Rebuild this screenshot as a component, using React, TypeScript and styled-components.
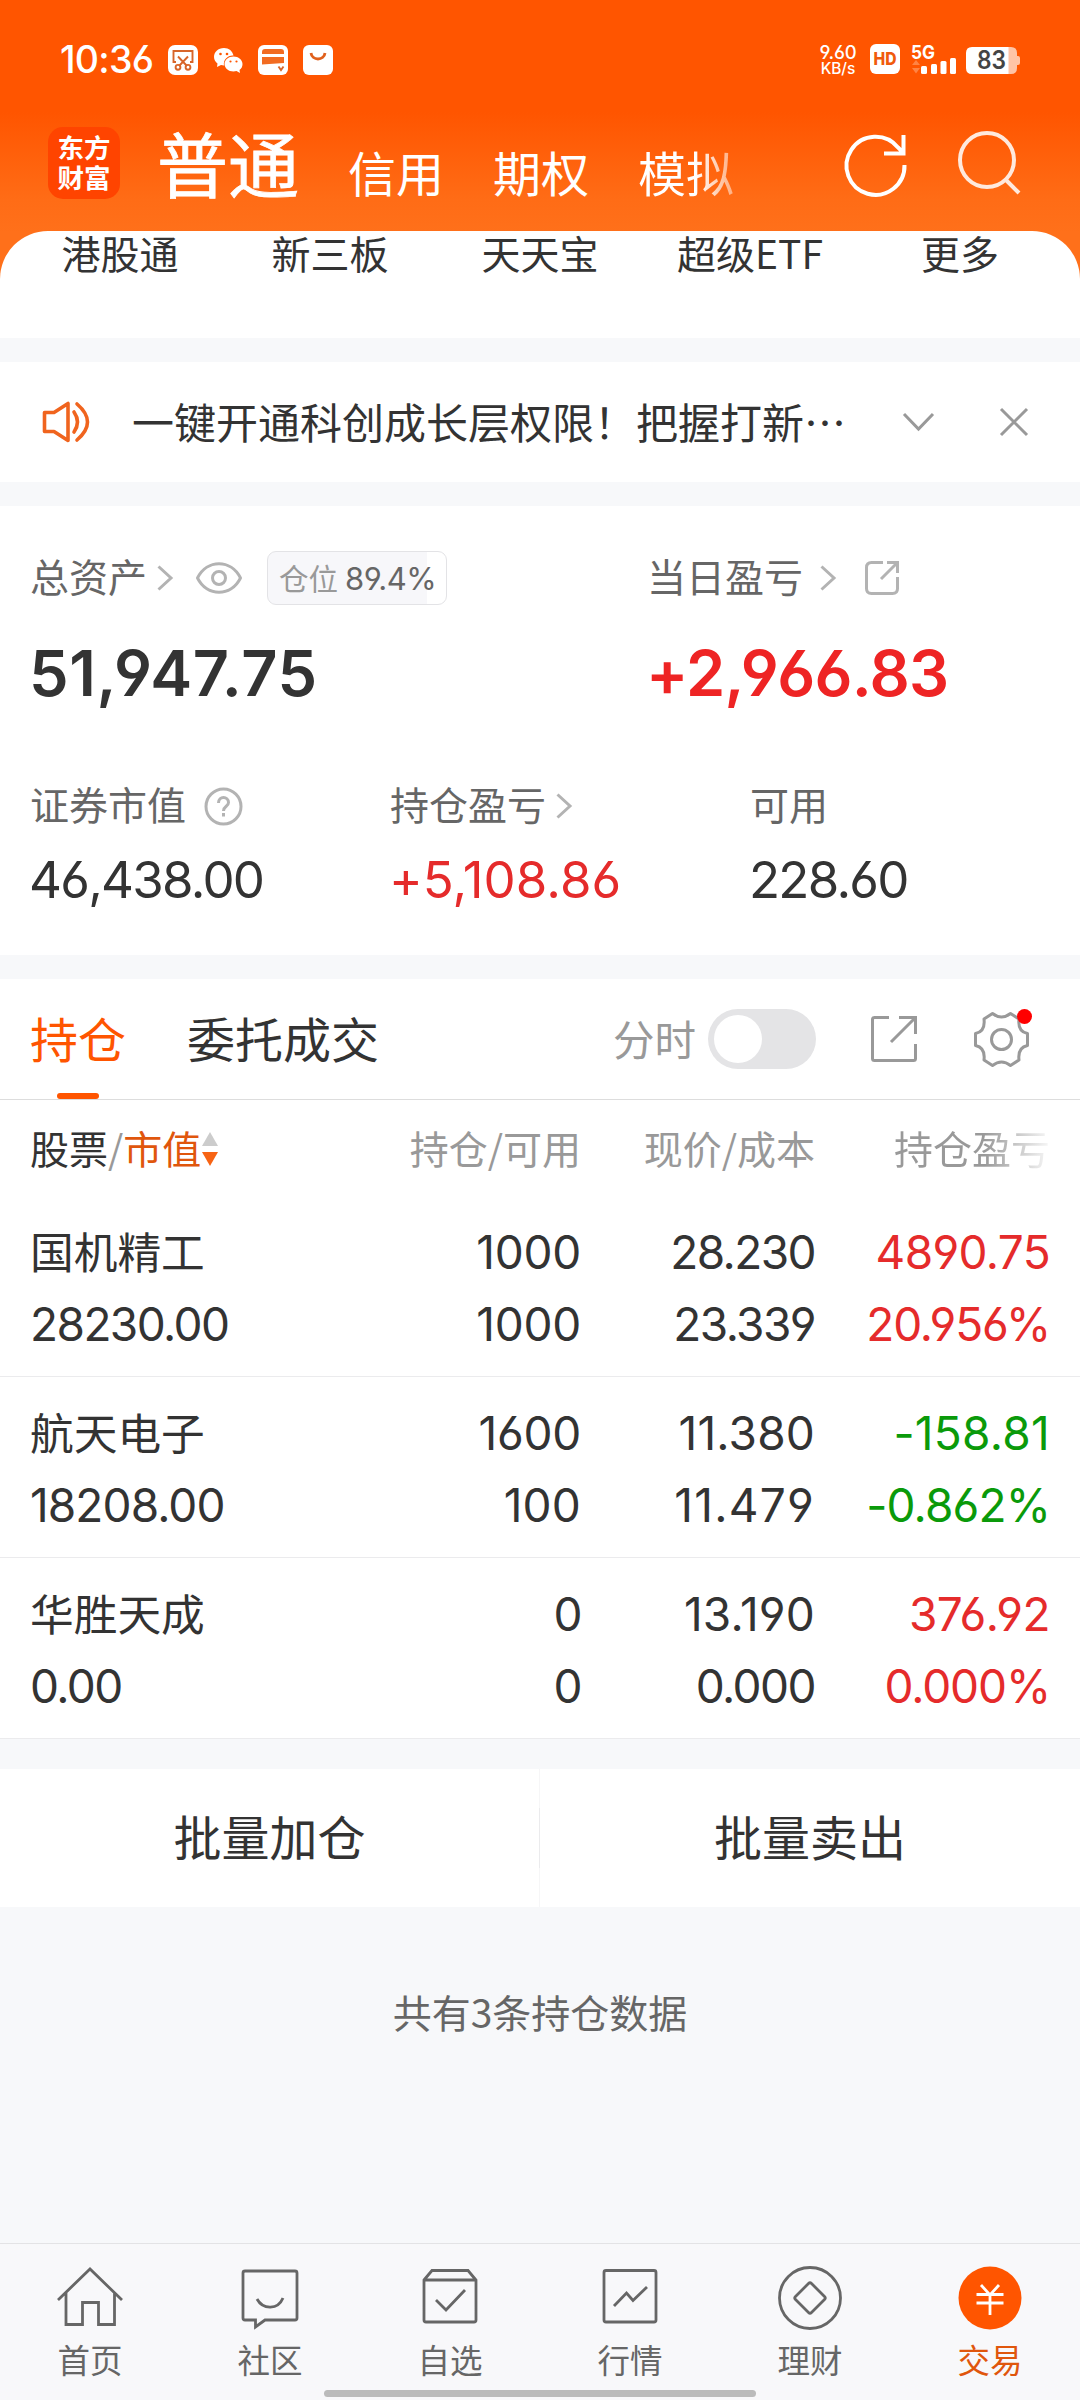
import React from 'react';
import styled, { createGlobalStyle } from 'styled-components';

const CJK = '"Noto Sans CJK SC", sans-serif';
const NUM = 'Inter, "Noto Sans CJK SC", sans-serif';

const Global = createGlobalStyle`
  * { box-sizing: border-box; }
  html, body { margin: 0; padding: 0; background: #f7f8fa; }
  body { font-family: ${CJK}; color: #333; }
  svg { display: block; flex: none; overflow: visible; }
`;

const Screen = styled.div`
  width: 1080px;
  height: 2400px;
  display: flex;
  flex-direction: column;
  background: #f7f8fa;
  overflow: hidden;
`;

const Hero = styled.header`
  height: 338px;
  flex: none;
  display: flex;
  flex-direction: column;
  background: linear-gradient(#ff5500 0, #ff5500 112px, #ff6c16 200px, #ff701a 232px);
`;

const StatusBar = styled.div`
  height: 104px;
  padding: 15px 60px 0 60px;
  display: flex;
  align-items: center;
  color: #fff;
`;

const Num = styled.span<{ $size: number; $weight?: number; $color?: string; $track?: number }>`
  font-family: ${NUM};
  font-size: ${p => p.$size}px;
  font-weight: ${p => p.$weight ?? 400};
  color: ${p => p.$color ?? 'inherit'};
  letter-spacing: ${p => p.$track ?? -0.035}em;
  font-feature-settings: "cv03", "cv04";
  line-height: 1;
  white-space: nowrap;
`;

const Clock = styled.div`
  width: 92px;
  display: flex;
`;

const StatusIcons = styled.div`
  display: flex;
  align-items: center;
  gap: 15px;
  margin-left: 16px;
`;

const StatusRight = styled.div`
  display: flex;
  align-items: center;
  margin-left: auto;
`;

const NetSpeed = styled.div`
  width: 40px;
  display: flex;
  flex-direction: column;
  align-items: center;
  margin-right: 12px;
`;

const AccountBar = styled.div`
  height: 127px;
  padding: 0 60px 0 48px;
  display: flex;
  align-items: flex-start;
  color: #fff;
`;

const Logo = styled.div`
  width: 72px;
  height: 72px;
  margin-top: 23px;
  padding-bottom: 2px;
  border-radius: 15px;
  background: #ff4400;
  display: grid;
  place-content: center;
  font-size: 26.5px;
  line-height: 30px;
  font-weight: 700;
  text-align: center;
`;

const AccountTabs = styled.nav`
  display: flex;
  align-items: baseline;
  gap: 49px;
  width: 594px;
  margin-left: 37px;
  padding-top: 7px;
`;

const AccountTab = styled.span<{ $active?: boolean; $fade?: boolean }>`
  font-size: ${p => (p.$active ? 71 : 48)}px;
  line-height: 100px;
  font-weight: 400;
  ${p => p.$active && '-webkit-text-stroke: 0.8px #fff;'}
  ${p => p.$fade && `
    background: linear-gradient(90deg, #fff 60%, rgba(255,255,255,.45));
    background-clip: text;
    color: transparent;
  `}
`;

const HeroActions = styled.div`
  display: flex;
  align-items: center;
  gap: 49px;
  margin: 28px -1px 0 auto;
`;

const Shortcuts = styled.div`
  height: 107px;
  display: grid;
  grid-template-columns: repeat(5, 210px);
  justify-content: center;
  background: #fff;
  border-radius: 48px 48px 0 0;
  font-size: 39px;
  line-height: 43px;
  text-align: center;
`;

const Notice = styled.section`
  height: 120px;
  flex: none;
  margin-top: 24px;
  padding: 0 52px 0 42px;
  background: #fff;
  display: flex;
  align-items: center;
  font-size: 42px;
`;

const NoticeText = styled.span`
  width: 716px;
  margin-left: 41px;
  padding-bottom: 4px;
  white-space: nowrap;
`;

const NoticeActions = styled.div`
  display: flex;
  align-items: center;
  gap: 66px;
  margin-left: auto;
`;

const Assets = styled.section`
  height: 449px;
  flex: none;
  margin-top: 24px;
  padding: 45px 30px 0;
  background: #fff;
`;

const Totals = styled.div`
  display: grid;
  grid-template-columns: 617px 1fr;
`;

const Breakdown = styled.div`
  display: grid;
  grid-template-columns: repeat(3, 360px);
  margin-top: 72px;
`;

const Label = styled.div<{ $height: number }>`
  height: ${p => p.$height}px;
  display: flex;
  align-items: center;
  font-size: 39px;
  color: #666;
  white-space: nowrap;
`;

const LabelText = styled.span`
  padding-bottom: 6px;
`;

const Gap = styled.span<{ $w: number }>`
  width: ${p => p.$w}px;
  flex: none;
`;

const Position = styled.div<{ $share: number }>`
  width: 180px;
  height: 54px;
  border: 1px solid #e3e3e6;
  border-radius: 9px;
  background: linear-gradient(90deg, #f7f7fa ${p => p.$share}%, #fff ${p => p.$share}%);
  display: flex;
  align-items: center;
  gap: 7px;
  padding-left: 11px;
  font-size: 29.5px;
  color: #999;
`;

const PositionText = styled.span`
  padding-bottom: 3px;
`;

const Amount = styled.div<{ $top: number }>`
  display: flex;
  margin-left: -1px;
  padding-top: ${p => p.$top}px;
`;

const Holdings = styled.section`
  flex: none;
  margin-top: 24px;
  background: #fff;
`;

const TabBar = styled.div`
  height: 121px;
  padding: 0 51px 0 30px;
  border-bottom: 1px solid #ddd;
  display: flex;
  align-items: center;
`;

const Tab = styled.div<{ $active?: boolean }>`
  height: 120px;
  display: flex;
  flex-direction: column;
  align-items: center;
  justify-content: space-between;
  margin-right: 61px;
  font-size: 48px;
  line-height: 117px;
  color: ${p => (p.$active ? '#ff5500' : '#333')};
  &::after {
    content: '';
    width: 42px;
    height: 6px;
    border-radius: 3px;
    margin-top: -6px;
    background: ${p => (p.$active ? '#ff5500' : 'transparent')};
  }
`;

const TabTools = styled.div`
  display: flex;
  align-items: center;
  margin-left: auto;
  font-size: 41.5px;
  color: #999;
`;

const TimelineText = styled.span`
  padding-bottom: 2px;
`;

const Switch = styled.div`
  width: 108px;
  height: 60px;
  margin: 0 55px 0 12px;
  padding: 6px;
  border-radius: 30px;
  background: #e4e4e6;
`;

const Knob = styled.div`
  width: 48px;
  height: 48px;
  border-radius: 50%;
  background: #fff;
`;

const GearWrap = styled.div`
  position: relative;
  margin-left: 57px;
  &::after {
    content: '';
    position: absolute;
    right: -3px;
    top: -3px;
    width: 15px;
    height: 15px;
    border-radius: 50%;
    background: #ff0000;
  }
`;

const TableRow = styled.div`
  display: grid;
  grid-template-columns: 300px 251px 234px 1fr;
  padding: 0 30px;
`;

const HeadRow = styled(TableRow)`
  height: 96px;
  align-items: center;
  padding-bottom: 2px;
  font-size: 39px;
  color: #999;
`;

const HeadCell = styled.div<{ $fade?: boolean }>`
  display: flex;
  justify-content: flex-end;
  white-space: nowrap;
  ${p => p.$fade && `
    background: linear-gradient(90deg, #999 0, #999 72%, #fff 102%);
    background-clip: text;
    color: transparent;
  `}
`;

const SortCell = styled.div`
  display: flex;
  align-items: center;
  gap: 1px;
`;

const SortArrows = styled.svg`
  margin-top: 4px;
`;

const Ink = styled.span<{ $c: string }>`
  color: ${p => p.$c};
`;

const Holding = styled(TableRow)`
  height: 181px;
  border-bottom: 1px solid #ebebed;
`;

const Pair = styled.div<{ $right?: boolean }>`
  display: flex;
  flex-direction: column;
  align-items: ${p => (p.$right ? 'flex-end' : 'flex-start')};
`;

const Line = styled.div`
  height: 72px;
  display: flex;
  align-items: center;
  &:first-child { margin-top: 20px; }
`;

const StockName = styled.span`
  padding-bottom: 5px;
  font-size: 43.7px;
`;

const Batch = styled.section`
  height: 138px;
  flex: none;
  margin-top: 30px;
  background: #fff;
  display: grid;
  grid-template-columns: 539px 1px 540px;
  font-size: 48px;
  line-height: 133px;
  text-align: center;
`;

const Divider = styled.i`
  background: linear-gradient(#f6f6f7 39px, #ebebed 39px, #ebebed 99px, #f6f6f7 99px);
`;

const Summary = styled.p`
  margin: 75px 0 0;
  font-size: 39px;
  line-height: 58px;
  text-align: center;
  color: #666;
`;

const BottomNav = styled.footer`
  height: 157px;
  flex: none;
  margin-top: auto;
  border-top: 1px solid #e3e3e5;
  background: #f8f8fa;
  display: flex;
  flex-direction: column;
  align-items: center;
`;

const NavItems = styled.div`
  width: 1080px;
  height: 146px;
  display: grid;
  grid-template-columns: repeat(6, 180px);
`;

const NavItem = styled.div<{ $active?: boolean }>`
  display: flex;
  flex-direction: column;
  align-items: center;
  padding-top: 19px;
  font-size: 32.5px;
  line-height: 48px;
  color: ${p => (p.$active ? '#e0560c' : '#666')};
  svg { margin-bottom: 2px; }
`;

const HomeBar = styled.div`
  width: 432px;
  height: 7px;
  border-radius: 4px;
  background: #bbb;
`;

const GLYPH_SLACK: Record<string, number> = { '1': 0.115, '7': 0.14, '+': 0.2, '-': 0.05, '%': 0.06 };

function Figure({ text, size, weight, color }: { text: string; size: number; weight?: number; color?: string }) {
  const slack = [...text].reduce((sum, ch) => sum + (GLYPH_SLACK[ch] ?? 0), 0);
  return (
    <Num $size={size} $weight={weight} $color={color} $track={Number((-0.034 + slack / text.length).toFixed(4))}>
      {text}
    </Num>
  );
}

const Chevron = () => (
  <svg width="16" height="26" viewBox="0 0 16 26" fill="none" stroke="#b3b3b3" strokeWidth="3">
    <path d="M1.5 1.5 14 13 1.5 24.5" />
  </svg>
);

const navIcons: Record<string, React.ReactNode> = {
  首页: <path d="M-32 2 0-29 32 2M-24-5V26.5H-7.5V4.500H8.500V26.500H24.500V-5" />,
  社区: <path d="M-25-27H25Q27-27 27-25V20Q27 22 25 22H-5L-14.500 29V22H-25Q-27 22-27 20V-25Q-27-27-25-27ZM-13 1C-7 12 8 12 13 0" />,
  自选: <path d="M-26-18-18-27.500H18L26-18V22Q26 24 24 24H-24Q-26 24-26 22ZM-26-18H26M-14 2-4 12 15-8" />,
  行情: <path d="M-24-27.500H24Q26-27.500 26-25.500V22Q26 24 24 24H-24Q-26 24-26 22V-25.500Q-26-27.500-24-27.500ZM-16 8-3.500-5 3 2.500 17-11" />,
  理财: <><circle r="30.500" /><path d="M-14.500-1.500-1.500-14.500Q0-16 1.500-14.500L14.500-1.500Q16 0 14.500 1.500L1.500 14.500Q0 16-1.500 14.500L-14.500 1.500Q-16 0-14.500-1.500Z" /></>,
  交易: <><circle r="31.500" fill="#ff5500" stroke="none" /><path stroke="#fff" d="M-9-13 0-3 9-13M0-3V17M-13.500-3.500H13.500M-13.500 5H13.500" /></>,
};

const holdings = [
  { name: '国机精工', value: '28230.00', qty: '1000', avail: '1000', price: '28.230', cost: '23.339', pl: '4890.75', pct: '20.956%', c: '#e52b2b' },
  { name: '航天电子', value: '18208.00', qty: '1600', avail: '100', price: '11.380', cost: '11.479', pl: '-158.81', pct: '-0.862%', c: '#0a9a0a' },
  { name: '华胜天成', value: '0.00', qty: '0', avail: '0', price: '13.190', cost: '0.000', pl: '376.92', pct: '0.000%', c: '#e52b2b' },
];

export default function App() {
  return (
    <Screen>
      <Global />
      <Hero>
        <StatusBar>
          <Clock><Num $size={37.5} $weight={500} $track={-0.02}>10:36</Num></Clock>
          <StatusIcons>
            <svg width="30" height="30" viewBox="0 0 30 30">
              <rect width="30" height="30" rx="7" fill="#fff" />
              <g fill="none" stroke="#d8652a" strokeWidth="1.900">
                <path d="M8 17H5.500V6H24.500V17H22M10 11.500 19 21M20 11.500 11 21" />
                <circle cx="10" cy="22.300" r="2.400" /><circle cx="20" cy="22.300" r="2.400" />
              </g>
            </svg>
            <svg width="30" height="30" viewBox="0 0 30 30">
              <path fill="#fff" d="M11 3C5 3 1 7 1 12c0 3 1.500 5 3.500 6.500L4 22l4-2 3 .5c-1-6 4-10.500 9.500-10C19.500 6 16 3 11 3Z" />
              <path fill="#fff" d="M20.500 11.500c-5 0-9 3.500-9 7.500s4 7.500 9 7.500l3-.5 3.500 2-.5-3c2-1.500 3-3.500 3-6 0-4-4-7.500-9-7.500Z" />
              <g fill="#ff5500"><circle cx="7.500" cy="9" r="1.300" /><circle cx="14" cy="9" r="1.300" /><circle cx="17.500" cy="16.500" r="1.100" /><circle cx="23.500" cy="16.500" r="1.100" /></g>
            </svg>
            <svg width="30" height="30" viewBox="0 0 30 30">
              <rect width="30" height="30" rx="6" fill="#fff" />
              <path fill="#f26b21" d="M4 9V7Q4 4 7 4H23Q26 4 26 7V9ZM4 12H26V18L4 19.500Z" />
              <path fill="none" stroke="#d8652a" strokeWidth="1.900" d="M20.500 21.500 23 25 25.500 21.500" />
            </svg>
            <svg width="30" height="30" viewBox="0 0 30 30">
              <rect width="30" height="30" rx="6" fill="#fff" />
              <path fill="none" stroke="#e0601c" strokeWidth="2.800" d="M8 8C9 16 21 16 22 8" />
            </svg>
          </StatusIcons>
          <StatusRight>
            <NetSpeed>
              <Num $size={18.5} $weight={500} $track={-0.01}>9.60</Num>
              <Num $size={15.5} $weight={500} $track={-0.01}>KB/s</Num>
            </NetSpeed>
            <svg width="150" height="31" viewBox="0 0 150 31">
              <rect x="0" y="0" width="30" height="30" rx="6" fill="#fff" />
              <text x="15" y="21.300" textAnchor="middle" fontFamily="Inter" fontWeight="800" fontSize="17" fill="#f05a0c" textLength="23" lengthAdjust="spacingAndGlyphs">HD</text>
              <text x="41" y="14.500" fontFamily="Inter" fontWeight="700" fontSize="19" fill="#fff" textLength="24" lengthAdjust="spacingAndGlyphs">5G</text>
              <path fill="#ff8444" d="M42 21 46 16 50 21ZM42 24 46 29.500 50 24Z" />
              <g fill="#fff"><rect x="51" y="22" width="6" height="8" rx="1.500" /><rect x="61" y="20" width="6" height="10" rx="1.500" /><rect x="70.500" y="17" width="6" height="13" rx="1.500" /><rect x="80" y="14" width="6" height="16" rx="1.500" /></g>
              <path fill="#ffc4a6" d="M138 3H141Q147 3 147 9V12H148Q150 12 150 14V19Q150 21 148 21H147V24Q147 30 141 30H138Z" />
              <path fill="#fff" d="M102 3H138.500V30H102Q96 30 96 24V9Q96 3 102 3Z" />
              <text x="121.500" y="25.300" textAnchor="middle" fontFamily="Inter" fontWeight="600" fontSize="25" fill="#444" textLength="29" lengthAdjust="spacingAndGlyphs">83</text>
            </svg>
          </StatusRight>
        </StatusBar>
        <AccountBar>
          <Logo>东方<br />财富</Logo>
          <AccountTabs>
            <AccountTab $active>普通</AccountTab>
            <AccountTab>信用</AccountTab>
            <AccountTab>期权</AccountTab>
            <AccountTab $fade>模拟</AccountTab>
          </AccountTabs>
          <HeroActions>
            <svg width="64" height="64" viewBox="0 0 64 64" fill="none" stroke="#fff" strokeWidth="4">
              <path d="M60.500 33A29 29 0 1 1 54 15.500L60 21.500M59.500 3V21.500H40" />
            </svg>
            <svg width="64" height="64" viewBox="0 0 64 64" fill="none" stroke="#ffe9dd" strokeWidth="4">
              <circle cx="30" cy="28" r="27" /><path d="M48 47 62 61" />
            </svg>
          </HeroActions>
        </AccountBar>
        <Shortcuts>
          {['港股通', '新三板', '天天宝', '超级ETF', '更多'].map(t => <span key={t}>{t}</span>)}
        </Shortcuts>
      </Hero>

      <Notice>
        <svg width="49" height="42" viewBox="0 0 49 42" fill="none" stroke="#f0641e" strokeWidth="3.600" strokeLinejoin="round" strokeLinecap="round">
          <path d="M2.500 11.500H12L26 2.500V39.500L12 30.500H2.500ZM32 11Q39 21 32 31M35 3Q56 21 35 39" />
        </svg>
        <NoticeText>一键开通科创成长层权限！把握打新…</NoticeText>
        <NoticeActions>
          <svg width="31" height="18" viewBox="0 0 31 18" fill="none" stroke="#999" strokeWidth="3"><path d="M1 1 15.500 16 30 1" /></svg>
          <svg width="28" height="26" viewBox="0 0 28 26" fill="none" stroke="#999" strokeWidth="3"><path d="M1 0 27 26M27 0 1 26" /></svg>
        </NoticeActions>
      </Notice>

      <Assets>
        <Totals>
          <div>
            <Label $height={54}>
              <LabelText>总资产</LabelText><Gap $w={10} /><Chevron /><Gap $w={23} />
              <svg width="46" height="32" viewBox="0 0 46 32" fill="none" stroke="#b3b3b3" strokeWidth="3">
                <path d="M1.500 16C11-3 35-3 44.500 16 35 35 11 35 1.500 16Z" strokeLinejoin="round" /><circle cx="23" cy="16" r="6.500" />
              </svg>
              <Gap $w={25} />
              <Position $share={89.4}><PositionText>仓位</PositionText><Num $size={31} $color="#666" $track={-0.015}>89.4%</Num></Position>
            </Label>
            <Amount $top={37}><Figure text="51,947.75" size={63} weight={560} /></Amount>
          </div>
          <div>
            <Label $height={54}>
              <LabelText>当日盈亏</LabelText><Gap $w={17} /><Chevron /><Gap $w={29} />
              <svg width="34" height="34" viewBox="0 0 34 34" fill="none" stroke="#b3b3b3" strokeWidth="3">
                <path d="M18 1.500H6.500Q1.500 1.500 1.500 6.500V27.500Q1.500 32.500 6.500 32.500H27.500Q32.500 32.500 32.500 27.500V16M22 1.500H32.500V12M32 2 16 18" />
              </svg>
            </Label>
            <Amount $top={37}><Figure text="+2,966.83" size={63} weight={560} color="#ee2424" /></Amount>
          </div>
        </Totals>
        <Breakdown>
          <div>
            <Label $height={58}>
              <LabelText>证券市值</LabelText><Gap $w={18} />
              <svg width="39" height="39" viewBox="0 0 39 39" fill="none" stroke="#b3b3b3" strokeWidth="3">
                <circle cx="19.500" cy="19.500" r="17.500" /><path d="M14.500 16C14.500 8.500 24.500 9 24.500 15.500 24.500 19.500 19.500 19 19.500 24M19.500 26V29.500" />
              </svg>
            </Label>
            <Amount $top={19}><Figure text="46,438.00" size={51} /></Amount>
          </div>
          <div>
            <Label $height={58}><LabelText>持仓盈亏</LabelText><Gap $w={10} /><Chevron /></Label>
            <Amount $top={19}><Figure text="+5,108.86" size={51} color="#e52b2b" /></Amount>
          </div>
          <div>
            <Label $height={58}><LabelText>可用</LabelText></Label>
            <Amount $top={19}><Figure text="228.60" size={51} /></Amount>
          </div>
        </Breakdown>
      </Assets>

      <Holdings>
        <TabBar>
          <Tab $active>持仓</Tab>
          <Tab>委托成交</Tab>
          <TabTools>
            <TimelineText>分时</TimelineText>
            <Switch><Knob /></Switch>
            <svg width="46" height="46" viewBox="0 0 46 46" fill="none" stroke="#999" strokeWidth="3">
              <path d="M18 1.500H3.500Q1.500 1.500 1.500 3.500V42.500Q1.500 44.500 3.500 44.500H42.500Q44.500 44.500 44.500 42.500V28M28 1.500H44.500V18M44 2 20 26" />
            </svg>
            <GearWrap>
              <svg width="55" height="55" viewBox="-27.500 -27.500 55 55" fill="none" stroke="#999" strokeWidth="3">
                <path d="M-9-26Q0-19 9-26L17.500-20.500Q16-8 26-6V6Q16 8 17.500 20.500L9 26Q0 19-9 26L-17.500 20.500Q-16 8-26 6V-6Q-16-8-17.500-20.500Z" strokeLinejoin="round" />
                <circle r="10" />
              </svg>
            </GearWrap>
          </TabTools>
        </TabBar>
        <HeadRow>
          <SortCell>
            <span><Ink $c="#333">股票</Ink>/<Ink $c="#e0560c">市值</Ink></span>
            <SortArrows width="16" height="34" viewBox="0 0 16 34"><path fill="#ccc" d="M0 14 8 0 16 14Z" /><path fill="#f76414" d="M0 20H16L8 34Z" /></SortArrows>
          </SortCell>
          <HeadCell>持仓/可用</HeadCell>
          <HeadCell>现价/成本</HeadCell>
          <HeadCell $fade>持仓盈亏</HeadCell>
        </HeadRow>
        {holdings.map(h => (
          <Holding key={h.name}>
            <Pair><Line><StockName>{h.name}</StockName></Line><Line><Figure size={46} text={h.value} /></Line></Pair>
            <Pair $right><Line><Figure size={46} text={h.qty} /></Line><Line><Figure size={46} text={h.avail} /></Line></Pair>
            <Pair $right><Line><Figure size={46} text={h.price} /></Line><Line><Figure size={46} text={h.cost} /></Line></Pair>
            <Pair $right><Line><Figure size={46} color={h.c} text={h.pl} /></Line><Line><Figure size={46} color={h.c} text={h.pct} /></Line></Pair>
          </Holding>
        ))}
      </Holdings>

      <Batch><span>批量加仓</span><Divider /><span>批量卖出</span></Batch>
      <Summary>共有3条持仓数据</Summary>

      <BottomNav>
        <NavItems>
          {Object.keys(navIcons).map(k => (
            <NavItem key={k} $active={k === '交易'}>
              <svg width="70" height="70" viewBox="-35 -35 70 70" fill="none" stroke="#666" strokeWidth="2.800">{navIcons[k]}</svg>
              {k}
            </NavItem>
          ))}
        </NavItems>
        <HomeBar />
      </BottomNav>
    </Screen>
  );
}
